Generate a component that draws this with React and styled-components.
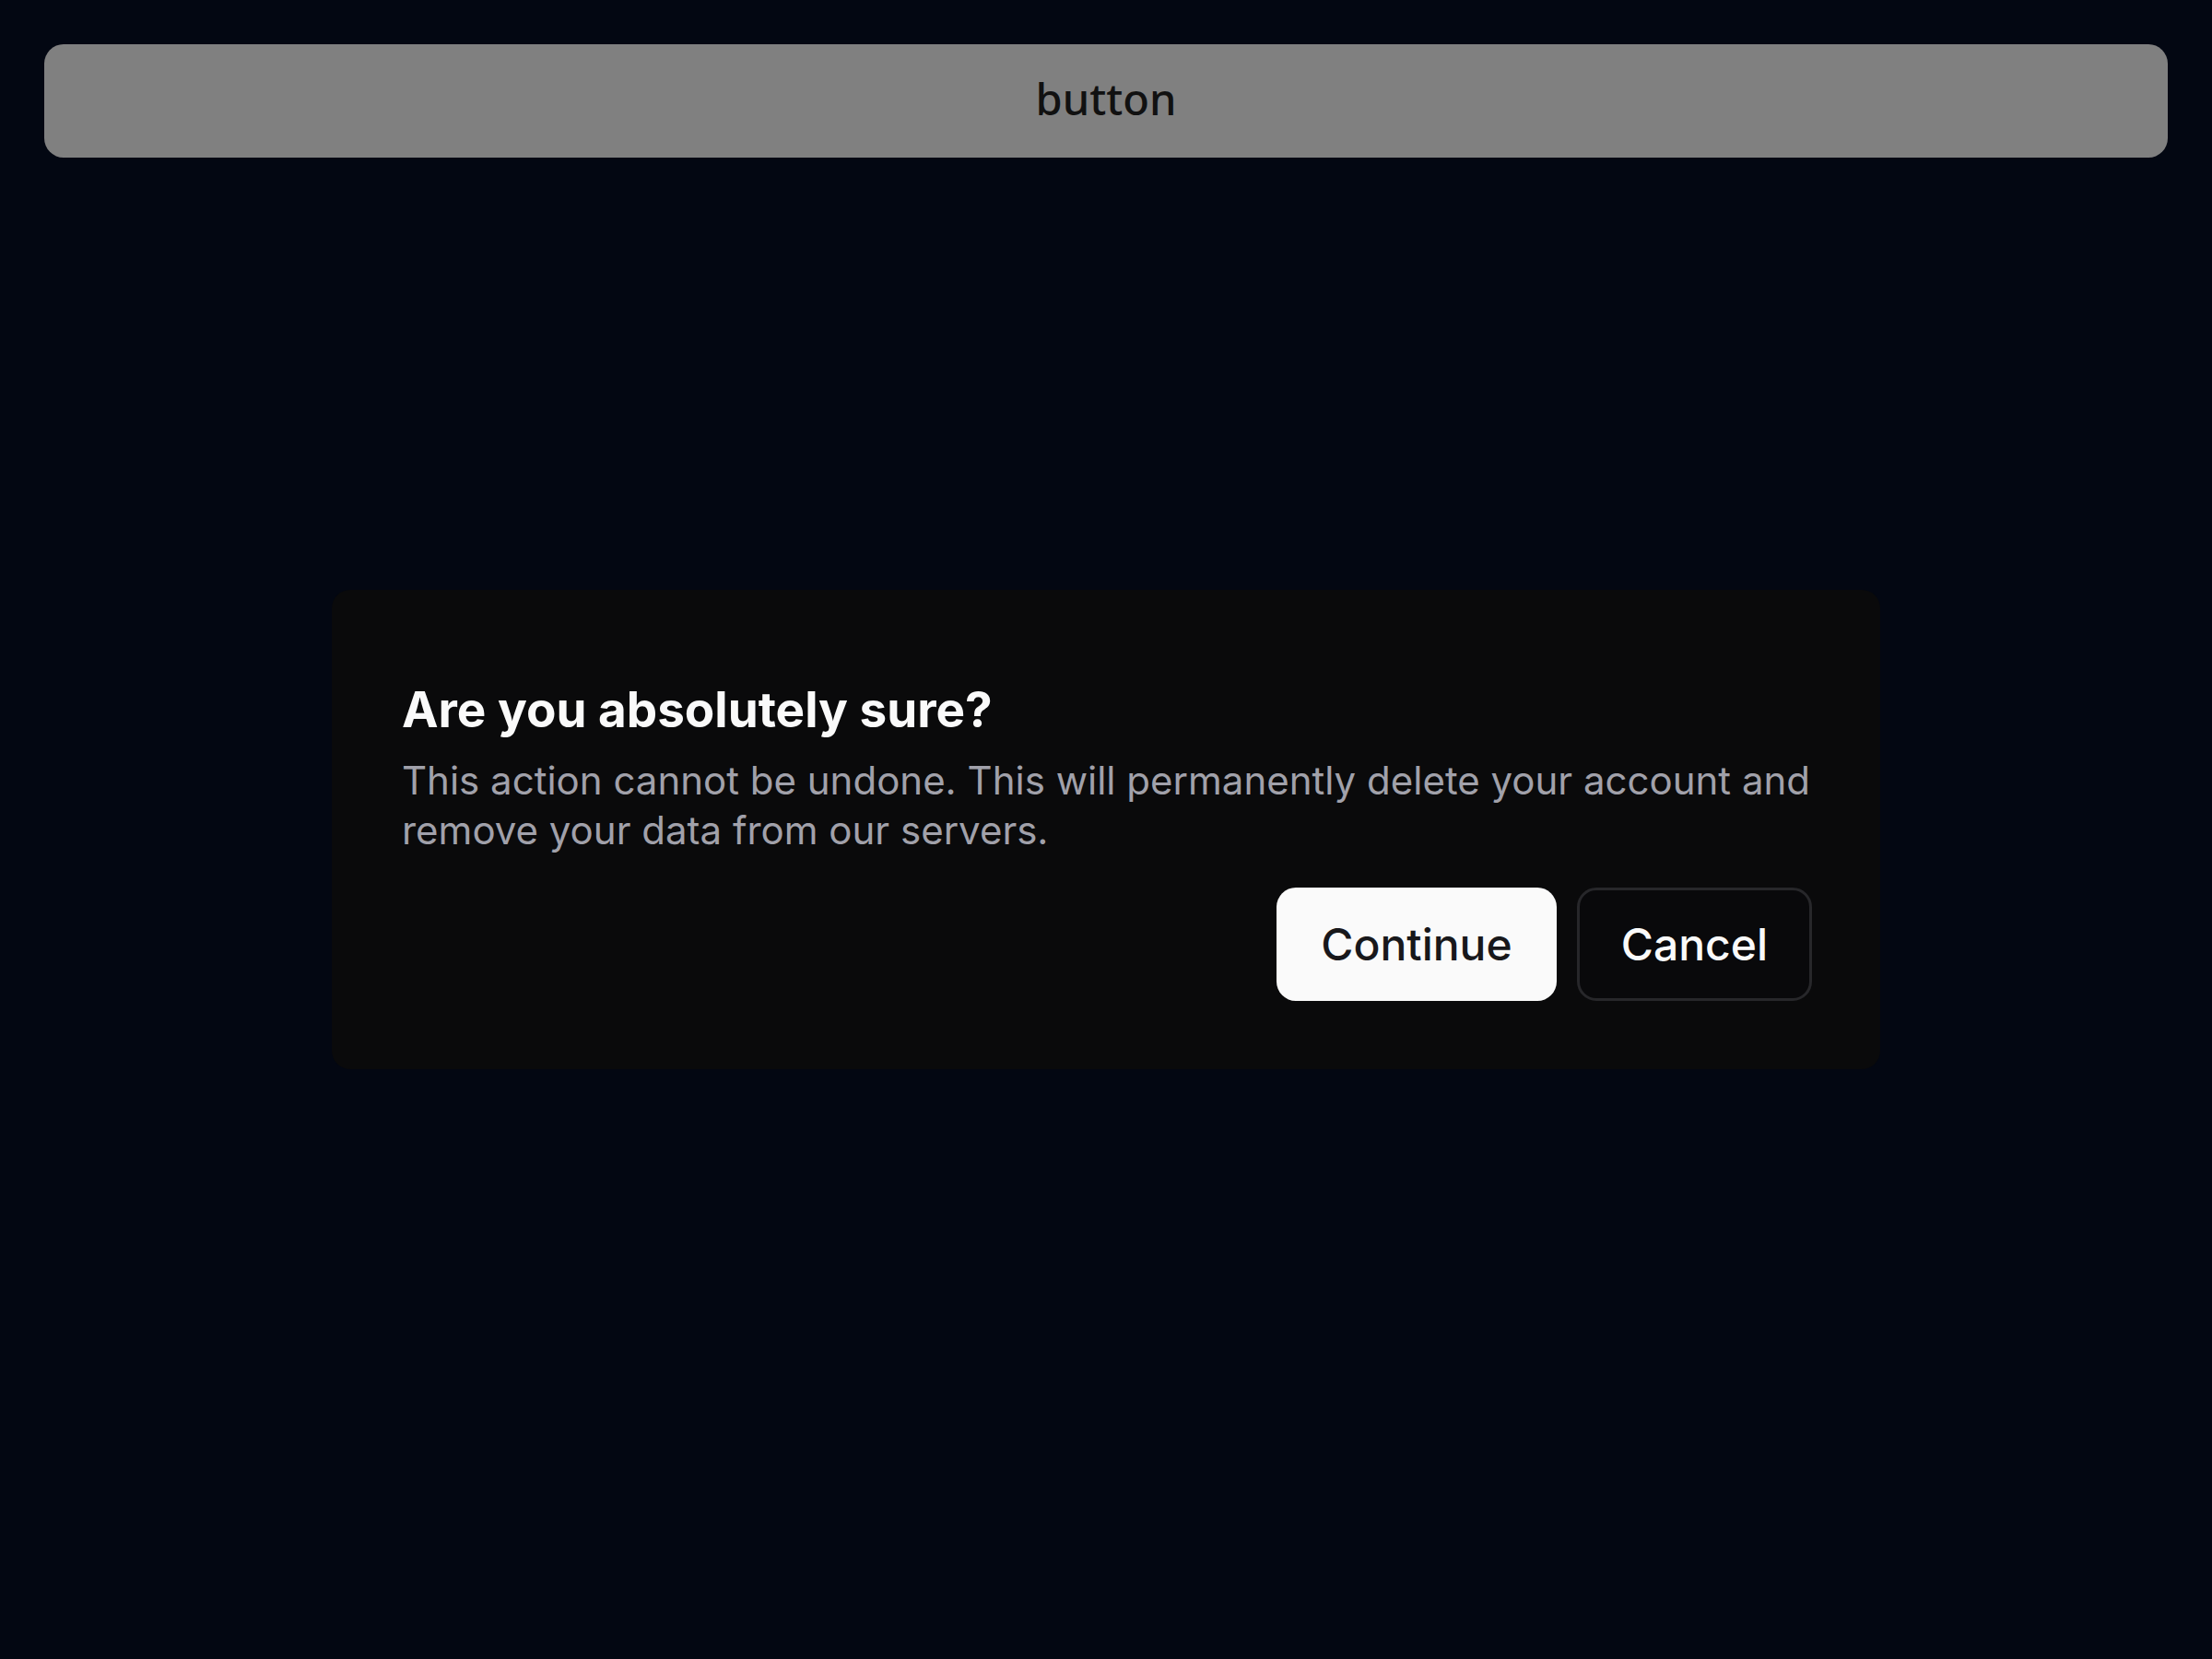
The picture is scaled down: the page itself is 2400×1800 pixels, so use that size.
import React from "react";
import styled, { createGlobalStyle } from "styled-components";

const GlobalStyle = createGlobalStyle`
  html, body {
    margin: 0;
    padding: 0;
    background: #030712;
  }
  body {
    font-family: Inter, "Noto Sans", sans-serif;
  }
`;

const Page = styled.div`
  min-height: 1800px;
  box-sizing: border-box;
  padding: 48px;
`;

const TopButton = styled.button`
  display: flex;
  align-items: center;
  justify-content: center;
  width: 100%;
  height: 123px;
  padding: 0 0 5px;
  border: none;
  border-radius: 21px;
  background: #808080;
  color: #111111;
  font-family: "Noto Sans", sans-serif;
  font-size: 47px;
  font-weight: 500;
  cursor: pointer;
`;

const Overlay = styled.div`
  position: fixed;
  inset: 0;
  display: flex;
  align-items: center;
  justify-content: center;
`;

const Dialog = styled.div`
  width: 1680px;
  box-sizing: border-box;
  padding: 90px 74px 74px 76px;
  background: #0a0a0b;
  border-radius: 20px;
  display: flex;
  flex-direction: column;
`;

const Title = styled.h2`
  margin: 0;
  font-family: Inter, sans-serif;
  font-size: 53px;
  line-height: 80px;
  font-weight: 700;
  color: #fafafa;
`;

const Description = styled.p`
  margin: 10px 0 0;
  font-family: Inter, sans-serif;
  font-size: 42px;
  line-height: 54px;
  color: #a1a1aa;
`;

const Footer = styled.div`
  display: flex;
  justify-content: flex-end;
  gap: 22px;
  margin-top: 35px;
`;

const ActionButton = styled.button`
  display: inline-flex;
  align-items: center;
  justify-content: center;
  box-sizing: border-box;
  height: 123px;
  padding: 0 ${(p) => (p.$primary ? "48px" : "45px")};
  border-radius: 21px;
  font-family: Inter, sans-serif;
  font-size: 48px;
  font-weight: 500;
  cursor: pointer;
  background: ${(p) => (p.$primary ? "#fafafa" : "#09090b")};
  color: ${(p) => (p.$primary ? "#18181b" : "#fafafa")};
  border: ${(p) => (p.$primary ? "none" : "3px solid #27272a")};
`;

export default function App() {
  return (
    <>
      <GlobalStyle />
      <Page>
        <TopButton>button</TopButton>
      </Page>
      <Overlay>
        <Dialog role="alertdialog">
          <Title>Are you absolutely sure?</Title>
          <Description>
            This action cannot be undone. This will permanently delete your
            account and remove your data from our servers.
          </Description>
          <Footer>
            <ActionButton $primary>Continue</ActionButton>
            <ActionButton>Cancel</ActionButton>
          </Footer>
        </Dialog>
      </Overlay>
    </>
  );
}
